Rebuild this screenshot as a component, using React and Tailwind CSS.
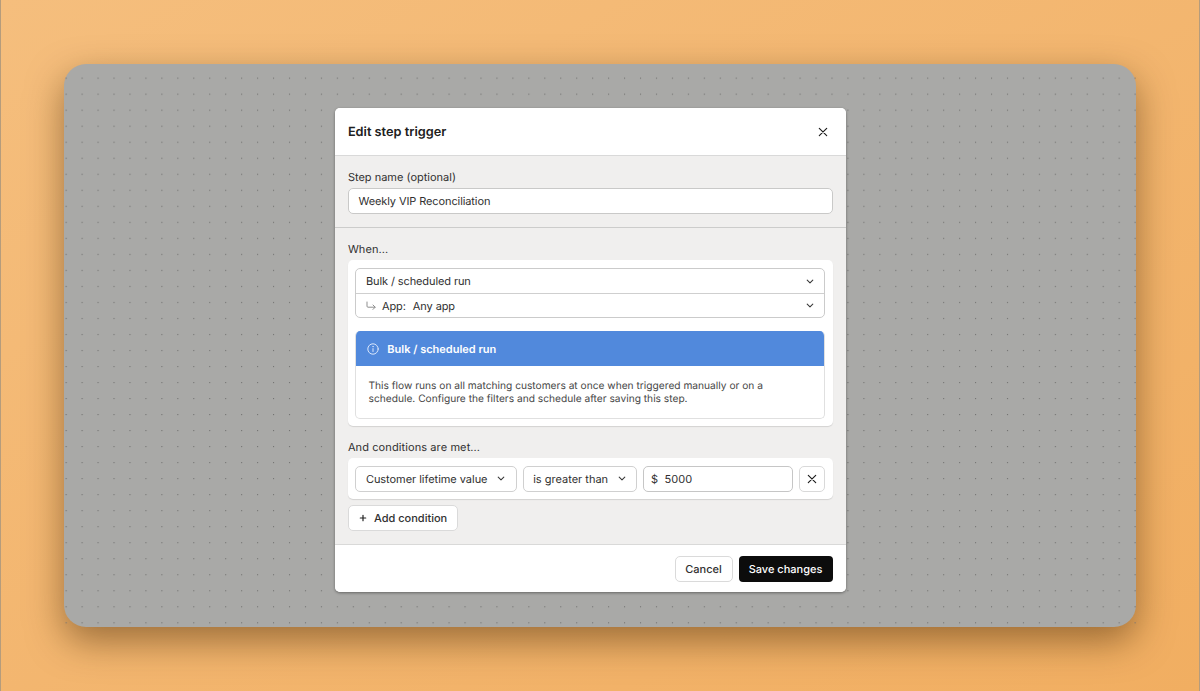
import React from "react";

function Chevron() {
  return (
    <svg className="h-[7px] w-[8px] shrink-0" viewBox="0 0 8 7" fill="none" stroke="#3a3a3a" strokeWidth="1.1" strokeLinecap="round" strokeLinejoin="round">
      <path d="M1.2 2.2 4 4.9 6.8 2.2" />
    </svg>
  );
}

function Cross() {
  return (
    <svg className="h-[10px] w-[10px] shrink-0" viewBox="0 0 10 10" fill="none" stroke="#1c1c1c" strokeWidth="1.15" strokeLinecap="round">
      <path d="M1.3 1.3 8.7 8.7M8.7 1.3 1.3 8.7" />
    </svg>
  );
}

function Plus() {
  return (
    <svg className="h-[8px] w-[8px] shrink-0" viewBox="0 0 8 8" fill="none" stroke="#222" strokeWidth="1.2" strokeLinecap="round">
      <path d="M4 1.3v5.4M1.3 4h5.4" />
    </svg>
  );
}

function SubArrow() {
  return (
    <svg className="h-[10px] w-[10px] shrink-0" viewBox="0 0 10 10" fill="none" stroke="#8f8f8f" strokeWidth="1" strokeLinecap="round" strokeLinejoin="round">
      <path d="M1 1v4.2a1 1 0 0 0 1 1h7M7 4l2.2 2.2L7 8.4" />
    </svg>
  );
}

function InfoIcon() {
  return (
    <svg className="h-[12px] w-[12px] shrink-0" viewBox="0 0 12 12" fill="none" stroke="#d9e6fb" strokeWidth="1" strokeLinecap="round">
      <circle cx="6" cy="6" r="5.2" />
      <path d="M6 5.6v2.9" />
      <circle cx="6" cy="3.7" r="0.35" fill="#d9e6fb" strokeWidth="0.6" />
    </svg>
  );
}

function DotGrid() {
  return (
    <svg className="absolute inset-0 h-full w-full" aria-hidden="true">
      <defs>
        <pattern id="dots" x="1.6" y="13.6" width="15.955" height="16.02" patternUnits="userSpaceOnUse">
          <rect width="1.1" height="1.1" fill="#727271" />
        </pattern>
      </defs>
      <rect width="100%" height="100%" fill="url(#dots)" />
    </svg>
  );
}

export default function App() {
  return (
    <div className="flex h-[691px] w-[1200px] border-x border-[#b59c7c] bg-linear-to-br from-[#f5be7d] to-[#f1ae61] px-[63px] pt-[64px] font-['Inter',sans-serif] text-[11px] leading-[14px] whitespace-nowrap text-[#303030] [text-rendering:geometricPrecision]">
      <div className="relative flex h-[563px] w-[1072px] justify-center rounded-[22px] bg-[#a9a9a7] pt-[44px] pr-[20px] shadow-[0_14px_36px_rgba(70,40,5,0.5)]">
        <DotGrid />
        <div className="relative flex h-[484px] w-[511px] flex-col overflow-hidden rounded-[5px] bg-[#f0efee] shadow-[0_1px_3px_rgba(0,0,0,0.4)]">
          <header className="flex h-[48px] items-center justify-between border-b border-[#d9d9d9] bg-white pr-[18px] pl-[13.4px]">
            <h1 className="pt-[3px] text-[12.75px] leading-[16px] font-semibold text-[#202020]">Edit step trigger</h1>
            <Cross />
          </header>

          <section className="h-[72px] border-b border-[#cccccb] px-[13px] pt-[14px]">
            <div className="pl-[0.4px]">Step name (optional)</div>
            <div className="mt-[4px] flex h-[26px] items-center rounded-[5px] border border-[#c9c9c8] bg-white px-[10px] tracking-[-0.1px]">Weekly VIP Reconciliation</div>
          </section>

          <section className="h-[317px] border-b border-[#d9d9d8] px-[13px] pt-[14px]">
            <div className="pl-[0.4px] tracking-[0.08px]">When...</div>
            <div className="mt-[4px] h-[166px] rounded-[5px] bg-white pt-[8px] pr-[8px] pl-[7px] shadow-[0_1px_1px_rgba(0,0,0,0.12)]">
              <div className="flex h-[50px] flex-col rounded-[5px] border border-[#cbcbcb] tracking-[-0.1px]">
                <div className="flex h-[25px] items-center justify-between border-b border-[#cfcfcf] pr-[10px] pl-[10.4px]">
                  <span>Bulk / scheduled run</span>
                  <Chevron />
                </div>
                <div className="flex h-[23px] items-center pr-[10px] pl-[10.5px]">
                  <SubArrow />
                  <span className="ml-[6px]">App:</span>
                  <span className="ml-[7px] flex-1">Any app</span>
                  <Chevron />
                </div>
              </div>
              <div className="mt-[13px] h-[88px] overflow-hidden rounded-[5px] border border-t-0 border-[#e0e0e0]">
                <div className="-mx-px flex h-[35px] items-center gap-[8.5px] bg-[#5189dc] px-[12.3px] font-semibold text-white">
                  <InfoIcon />
                  <span>Bulk / scheduled run</span>
                </div>
                <p className="pt-[14px] pl-[13px] text-[10.2px] leading-[13px] text-[#474747]">
                  This flow runs on all matching customers at once when triggered manually or on a
                  <br />
                  schedule. Configure the filters and schedule after saving this step.
                </p>
              </div>
            </div>

            <div className="mt-[14px] pl-[0.4px] tracking-[0.1px]">And conditions are met...</div>
            <div className="mt-[4px] flex h-[41px] items-center gap-[6px] rounded-[5px] bg-white pr-[8px] pl-[7px] shadow-[0_1px_1px_rgba(0,0,0,0.12)]">
              <div className="flex h-[26px] w-[162px] items-center justify-between rounded-[5px] border border-[#d0d0d0] pr-[10.5px] pl-[10.4px]">
                <span className="tracking-[-0.04px]">Customer lifetime value</span>
                <Chevron />
              </div>
              <div className="flex h-[26px] w-[114px] items-center justify-between rounded-[5px] border border-[#d0d0d0] pr-[10px] pl-[9.7px]">
                <span>is greater than</span>
                <Chevron />
              </div>
              <div className="flex h-[26px] w-[150px] items-center gap-[6.5px] rounded-[5px] border border-[#c6c6c6] px-[7.5px]">
                <span>$</span>
                <span>5000</span>
              </div>
              <div className="flex h-[26px] w-[26px] items-center justify-center rounded-[5px] border border-[#d9d9d9]">
                <Cross />
              </div>
            </div>
            <div className="mt-[6px] flex h-[26px] w-[110px] items-center gap-[7.5px] rounded-[5px] border border-[#dadada] bg-white px-[10px] font-medium">
              <Plus />
              <span>Add condition</span>
            </div>
          </section>

          <footer className="flex flex-1 items-center justify-end gap-[6px] bg-white pr-[13px] font-medium">
            <div className="flex h-[26px] w-[58px] items-center justify-center rounded-[5px] border border-[#dadada]">Cancel</div>
            <div className="flex h-[26px] w-[94px] items-center justify-center rounded-[4px] bg-[#0c0c0c] text-white">Save changes</div>
          </footer>
        </div>
      </div>
    </div>
  );
}
